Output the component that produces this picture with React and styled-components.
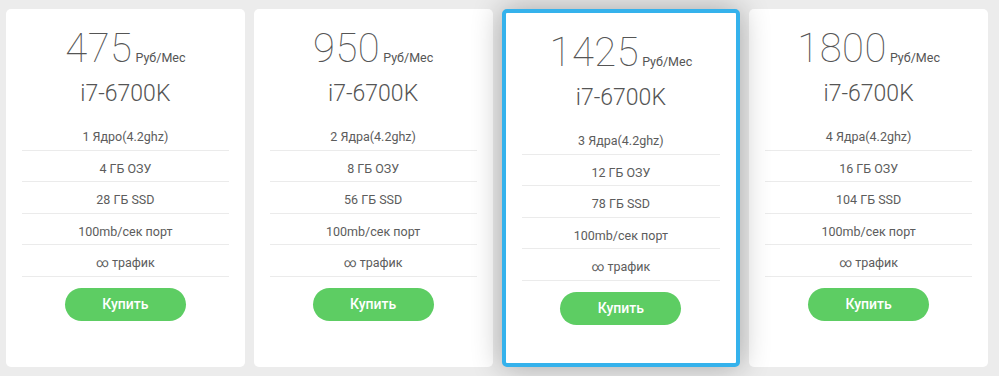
import React from 'react';
import styled, { createGlobalStyle } from 'styled-components';

const GlobalStyle = createGlobalStyle`
    body {
        margin: 0;
        background: #ececec;
        font-family: Roboto, "Liberation Sans", sans-serif;
    }
`;

const Grid = styled.div`
    display: grid;
    grid-template-columns: repeat(4, 1fr);
    gap: 9px;
    padding: 9px 11px 10px 6px;
`;

const Card = styled.div`
    position: relative;
    z-index: ${p => (p.$active ? 1 : 0)};
    background: #fff;
    border-radius: 5px;
    border: ${p => (p.$active ? '4px solid #35b2ec' : '0')};
    box-shadow: ${p => (p.$active ? '0 0 30px rgba(0, 0, 0, 0.3)' : 'none')};
    padding: 20px 16px 38px;
    text-align: center;
    color: #555;
`;

const Price = styled.div`
    font-size: 40px;
    line-height: 40px;
    font-weight: 100;
    letter-spacing: 0.5px;
    color: #555;
`;

const Unit = styled.span`
    font-size: 12.5px;
    line-height: 1;
    font-weight: 400;
    letter-spacing: 0;
    margin-left: 3px;
    color: #555;
`;

const Model = styled.div`
    margin-top: 11px;
    font-size: 23px;
    line-height: 28px;
    font-weight: 300;
    color: #555;
`;

const Features = styled.ul`
    list-style: none;
    margin: 11px 0 0;
    padding: 0;
`;

const Feature = styled.li`
    height: 27.5px;
    padding-top: 3px;
    line-height: 30px;
    font-size: 12.5px;
    border-bottom: 1px solid #ebebeb;
    color: #5c5c5c;
`;

const BuyButton = styled.button`
    display: block;
    margin: 11px auto 0;
    width: 121px;
    height: 33px;
    border: 0;
    border-radius: 17px;
    background: #5dcd63;
    color: #fff;
    font-family: Roboto, "Liberation Sans", sans-serif;
    font-size: 14px;
    font-weight: 500;
    cursor: pointer;
`;

const plans = [
    { price: 475, cores: '1 Ядро(4.2ghz)', ram: 4, ssd: 28 },
    { price: 950, cores: '2 Ядра(4.2ghz)', ram: 8, ssd: 56 },
    { price: 1425, cores: '3 Ядра(4.2ghz)', ram: 12, ssd: 78, active: true },
    { price: 1800, cores: '4 Ядра(4.2ghz)', ram: 16, ssd: 104 },
];

const Plan = ({ plan }) => (
    <Card $active={plan.active}>
        <Price>
            {plan.price}<Unit>Руб/Мес</Unit>
        </Price>
        <Model>i7-6700K</Model>
        <Features>
            <Feature>{plan.cores}</Feature>
            <Feature>{plan.ram} ГБ ОЗУ</Feature>
            <Feature>{plan.ssd} ГБ SSD</Feature>
            <Feature>100mb/сек порт</Feature>
            <Feature>∞ трафик</Feature>
        </Features>
        <BuyButton>Купить</BuyButton>
    </Card>
);

export default function App() {
    return (
        <>
            <GlobalStyle />
            <Grid>
                {plans.map(p => <Plan key={p.price} plan={p} />)}
            </Grid>
        </>
    );
}
